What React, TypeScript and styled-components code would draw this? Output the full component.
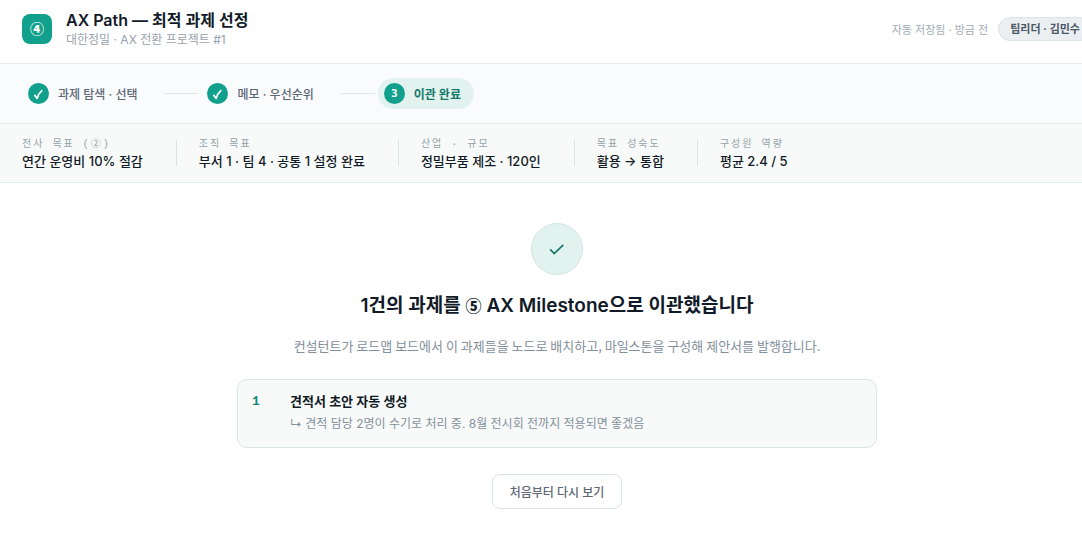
import React from 'react';
import styled, { createGlobalStyle, css } from 'styled-components';

const GlobalStyle = createGlobalStyle`
  * { box-sizing: border-box; }
  body {
    margin: 0;
    overflow-x: hidden;
    background: #ffffff;
    color: #111a27;
    font-family: Inter, "Noto Sans CJK KR", sans-serif;
    font-size: 13px;
  }
  h1, h2, h3, p, ol, ul, dl, dt, dd { margin: 0; padding: 0; }
  ol, ul { list-style: none; }
`;

const Page = styled.div`
  min-width: 1114px;
`;

const Header = styled.header`
  display: flex;
  align-items: center;
  gap: 14px;
  padding: 8px 22px 13px;
  border-bottom: 1px solid #e8ecef;
`;

const Logo = styled.div`
  display: grid;
  place-items: center;
  width: 30px;
  height: 30px;
  padding-bottom: 2px;
  border-radius: 8px;
  background: #11a08b;
  color: #ffffff;
  font-family: "Noto Sans CJK KR", sans-serif;
  font-size: 14px;
  font-weight: 900;
  line-height: 18px;
`;

const Heading = styled.div`
  flex: 1;
  padding-bottom: 2px;
`;

const Title = styled.h1`
  font-size: 16px;
  font-weight: 600;
  line-height: 24px;
`;

const Subtitle = styled.p`
  color: #97a3ae;
  font-size: 12px;
  line-height: 16px;
`;

const Account = styled.div`
  display: flex;
  align-items: center;
  gap: 10px;
`;

const SaveState = styled.span`
  color: #a0abb3;
  font-size: 11px;
`;

const UserPill = styled.span`
  padding: 0 11px;
  border: 1px solid #d9e5e5;
  border-radius: 12px;
  background: #ebeff2;
  color: #4b5766;
  font-size: 11px;
  font-weight: 600;
  line-height: 22px;
`;

const Stepper = styled.ol`
  display: flex;
  align-items: center;
  padding: 14px 22px;
  border-bottom: 1px solid #e8ecef;
  background: #fafbfd;
`;

const StepLink = styled.li`
  width: 34px;
  height: 1px;
  margin: 0 3px 0 14px;
  background: #dfe5e8;
`;

const Step = styled.li<{ $active?: boolean }>`
  display: flex;
  align-items: center;
  gap: 9px;
  height: 31px;
  padding: 0 13px 0 6px;
  border-radius: 16px;
  color: #5c6875;
  font-size: 12px;
  font-weight: 500;
  ${(p) => p.$active && css`
    background: #e2f3ef;
    color: #14776a;
    font-weight: 600;
  `}
`;

const StepMark = styled.span`
  display: grid;
  place-items: center;
  width: 21px;
  height: 21px;
  border-radius: 50%;
  background: #11a08b;
  color: #ffffff;
  font-family: "DejaVu Sans Mono", monospace;
  font-size: 11px;
  font-weight: 700;
`;

const Facts = styled.dl`
  display: flex;
  align-items: center;
  padding: 14px 22px 12px;
  border-bottom: 1px solid #def1ec;
  background: #f8faf9;
`;

const Fact = styled.div`
  position: relative;
  padding-right: 34px;
  margin-right: 22px;
  &:not(:last-child)::after {
    content: "";
    position: absolute;
    top: 2px;
    right: 0;
    width: 1px;
    height: 26px;
    background: #d9e5e3;
  }
`;

const FactLabel = styled.dt`
  color: #94a3ab;
  font-family: "Liberation Mono", "Noto Sans CJK KR", monospace;
  font-size: 10px;
  letter-spacing: 2px;
  line-height: 14px;
`;

const FactValue = styled.dd`
  font-size: 13px;
  font-weight: 500;
  line-height: 18px;
`;

const Result = styled.main`
  display: flex;
  flex-direction: column;
  align-items: center;
  padding: 40px 22px 32px;
`;

const DoneBadge = styled.div`
  display: grid;
  place-items: center;
  width: 52px;
  height: 52px;
  border: 1px solid #d3e5e1;
  border-radius: 50%;
  background: #e2f3ef;
  color: #14776a;
`;

const ResultTitle = styled.h2`
  margin-top: 17px;
  font-size: 19px;
  font-weight: 600;
  line-height: 28px;
`;

const StageNumber = styled.span`
  font-family: "Noto Sans CJK KR", sans-serif;
  font-size: 16px;
  font-weight: 900;
  line-height: 1;
`;

const ResultText = styled.p`
  margin-top: 15px;
  color: #83909b;
  font-family: "Noto Sans CJK KR", sans-serif;
  font-size: 13px;
  line-height: 22px;
`;

const TaskList = styled.ol`
  width: 100%;
  max-width: 640px;
  margin-top: 22px;
`;

const Task = styled.li`
  display: grid;
  grid-template-columns: 24px 1fr;
  gap: 14px;
  padding: 10px 14px 13px;
  border: 1px solid #d9e7e4;
  border-radius: 10px;
  background: #f8faf9;
`;

const TaskNumber = styled.span`
  color: #14877a;
  font-family: "Liberation Mono", monospace;
  font-size: 13px;
  font-weight: 700;
  line-height: 24px;
`;

const TaskTitle = styled.h3`
  font-size: 13px;
  font-weight: 600;
  line-height: 22px;
`;

const TaskNote = styled.p`
  margin-top: 2px;
  color: #83909b;
  font-size: 12px;
  line-height: 20px;
`;

const RestartButton = styled.button`
  height: 35px;
  margin-top: 26px;
  padding: 0 17px;
  border: 1px solid #d9e5e5;
  border-radius: 8px;
  background: #ffffff;
  color: #5c6875;
  font-family: inherit;
  font-size: 12px;
  font-weight: 500;
`;

const StepCheck = () => (
  <svg width="11" height="12" viewBox="0 0 11 12" fill="none" aria-hidden="true">
    <path d="M1.8 7.4 4.2 10.4 C5 7.2 6.6 4.6 8.8 2.6" stroke="currentColor" strokeWidth="1.7" strokeLinecap="round" strokeLinejoin="round" />
  </svg>
);

const DoneCheck = () => (
  <svg width="16" height="12" viewBox="0 0 16 12" fill="none" aria-hidden="true">
    <path d="M1.2 6.4 5.2 10.6 14.3 1.8" stroke="currentColor" strokeWidth="1.6" />
  </svg>
);

const facts = [
  ['전사 목표 (②)', '연간 운영비 10% 절감'],
  ['조직 목표', '부서 1 · 팀 4 · 공통 1 설정 완료'],
  ['산업 · 규모', '정밀부품 제조 · 120인'],
  ['목표 성숙도', '활용 → 통합'],
  ['구성원 역량', '평균 2.4 / 5'],
];

export default function App() {
  return (
    <>
      <GlobalStyle />
      <Page>
        <Header>
          <Logo>④</Logo>
          <Heading>
            <Title>AX Path — 최적 과제 선정</Title>
            <Subtitle>대한정밀 · AX 전환 프로젝트 #1</Subtitle>
          </Heading>
          <Account>
            <SaveState>자동 저장됨 · 방금 전</SaveState>
            <UserPill>팀리더 · 김민수</UserPill>
          </Account>
        </Header>
        <Stepper>
          <Step><StepMark><StepCheck /></StepMark>과제 탐색 · 선택</Step>
          <StepLink aria-hidden="true" />
          <Step><StepMark><StepCheck /></StepMark>메모 · 우선순위</Step>
          <StepLink aria-hidden="true" />
          <Step $active aria-current="step"><StepMark>3</StepMark>이관 완료</Step>
        </Stepper>
        <Facts>
          {facts.map(([label, value]) => (
            <Fact key={label}>
              <FactLabel>{label}</FactLabel>
              <FactValue>{value}</FactValue>
            </Fact>
          ))}
        </Facts>
        <Result>
          <DoneBadge><DoneCheck /></DoneBadge>
          <ResultTitle>1건의 과제를 <StageNumber>⑤</StageNumber> AX Milestone으로 이관했습니다</ResultTitle>
          <ResultText>컨설턴트가 로드맵 보드에서 이 과제들을 노드로 배치하고, 마일스톤을 구성해 제안서를 발행합니다.</ResultText>
          <TaskList>
            <Task>
              <TaskNumber>1</TaskNumber>
              <div>
                <TaskTitle>견적서 초안 자동 생성</TaskTitle>
                <TaskNote>↳ 견적 담당 2명이 수기로 처리 중. 8월 전시회 전까지 적용되면 좋겠음</TaskNote>
              </div>
            </Task>
          </TaskList>
          <RestartButton type="button">처음부터 다시 보기</RestartButton>
        </Result>
      </Page>
    </>
  );
}
